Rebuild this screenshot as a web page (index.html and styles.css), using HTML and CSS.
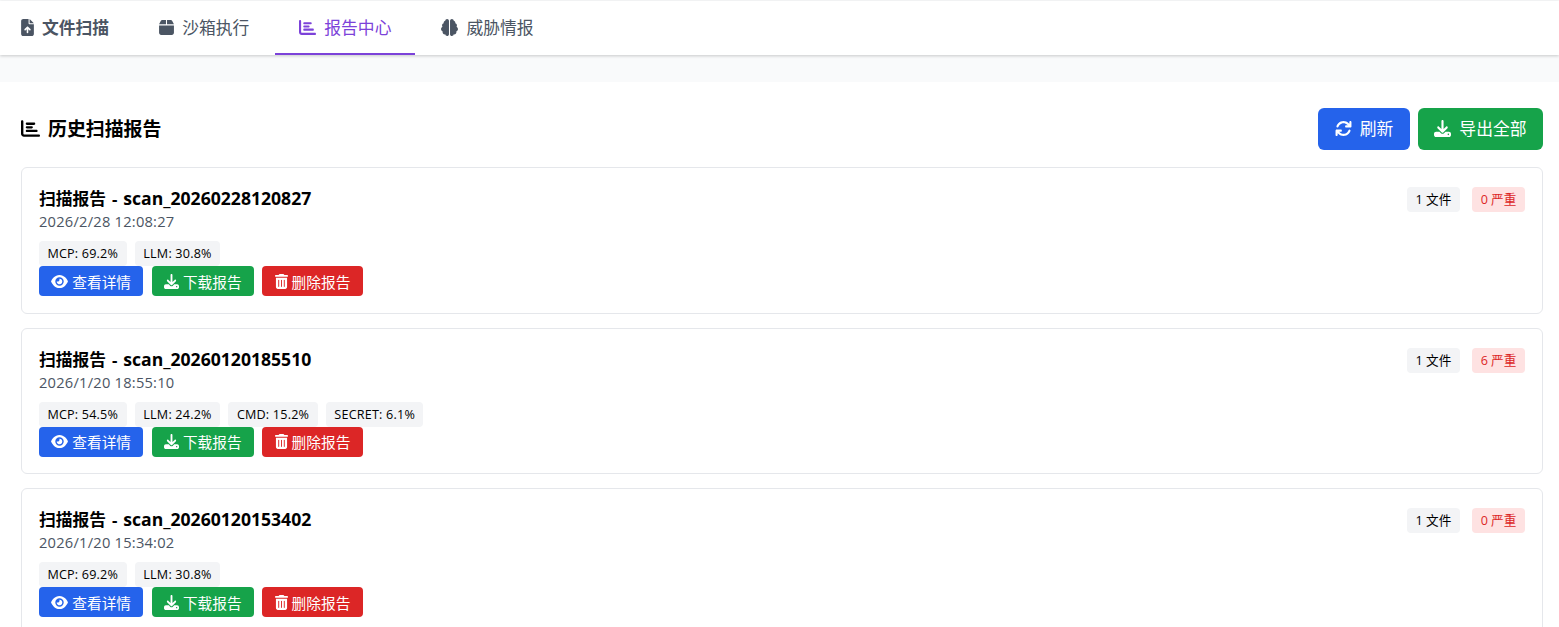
FILE: index.html
```html
<!DOCTYPE html>
<html lang="zh-CN">
<head>
  <meta charset="UTF-8">
  <title>报告中心</title>
  <link rel="stylesheet" href="styles.css">
</head>
<body>

  <!-- shared icons -->
  <svg class="sprite">
    <symbol id="i-file" viewBox="0 0 384 512"><path d="M64 0C28.7 0 0 28.7 0 64V448c0 35.3 28.7 64 64 64H320c35.3 0 64-28.7 64-64V160H256c-17.7 0-32-14.3-32-32V0H64zM256 0V128H384L256 0zM216 408c0 13.3-10.7 24-24 24s-24-10.7-24-24V305.9l-31 31c-9.4 9.4-24.6 9.4-33.9 0s-9.4-24.6 0-33.9l72-72c9.4-9.4 24.6-9.4 33.9 0l72 72c9.4 9.4 9.4 24.6 0 33.9s-24.6 9.4-33.9 0l-31-31V408z"/></symbol>
    <symbol id="i-box" viewBox="0 0 448 512"><path d="M50.7 58.5L0 160H208V32H93.7C75.5 32 58.9 42.3 50.7 58.5zM240 160H448L397.3 58.5C389.1 42.3 372.5 32 354.3 32H240V160zm208 32H0V416c0 35.3 28.7 64 64 64H384c35.3 0 64-28.7 64-64V192z"/></symbol>
    <symbol id="i-chart" viewBox="0 0 512 512"><path d="M32 32c17.7 0 32 14.3 32 32V400c0 8.8 7.2 16 16 16H480c17.7 0 32 14.3 32 32s-14.3 32-32 32H80c-44.2 0-80-35.8-80-80V64C0 46.3 14.3 32 32 32zm96 96c0-17.7 14.3-32 32-32l192 0c17.7 0 32 14.3 32 32s-14.3 32-32 32l-192 0c-17.7 0-32-14.3-32-32zm32 64H288c17.7 0 32 14.3 32 32s-14.3 32-32 32H160c-17.7 0-32-14.3-32-32s14.3-32 32-32zm0 96H416c17.7 0 32 14.3 32 32s-14.3 32-32 32H160c-17.7 0-32-14.3-32-32s14.3-32 32-32z"/></symbol>
    <symbol id="i-brain" viewBox="0 0 512 512"><path d="M184 0c30.9 0 56 25.1 56 56V456c0 30.9-25.1 56-56 56c-28.9 0-52.7-21.9-55.7-50.1c-5.2 1.4-10.7 2.1-16.3 2.1c-35.3 0-64-28.7-64-64c0-7.4 1.3-14.6 3.6-21.2C21.4 367.4 0 338.2 0 304c0-31.9 18.7-59.5 45.8-72.3C37.1 220.8 32 207 32 192c0-30.7 21.6-56.3 50.4-62.6C80.8 123.9 80 118 80 112c0-29.9 20.6-55.1 48.3-62.1C131.3 21.9 155.1 0 184 0zM328 0c28.9 0 52.6 21.9 55.7 49.9c27.8 7 48.3 32.1 48.3 62.1c0 6-.8 11.9-2.4 17.4c28.8 6.2 50.4 31.9 50.4 62.6c0 15-5.1 28.8-13.8 39.7C493.3 244.5 512 272.1 512 304c0 34.2-21.4 63.4-51.6 74.8c2.3 6.6 3.6 13.8 3.6 21.2c0 35.3-28.7 64-64 64c-5.6 0-11.1-.7-16.3-2.1c-3 28.2-26.8 50.1-55.7 50.1c-30.9 0-56-25.1-56-56V56c0-30.9 25.1-56 56-56z"/></symbol>
    <symbol id="i-sync" viewBox="0 0 512 512"><path d="M105.1 202.6c7.7-21.8 20.2-42.3 37.8-59.8c62.5-62.5 163.8-62.5 226.3 0L386.3 160H336c-17.7 0-32 14.3-32 32s14.3 32 32 32H463.5c0 0 0 0 0 0h.4c17.7 0 32-14.3 32-32V64c0-17.7-14.3-32-32-32s-32 14.3-32 32v51.2L414.4 97.6c-87.5-87.5-229.3-87.5-316.8 0C73.2 122 55.6 150.7 44.8 181.4c-5.9 16.7 2.9 34.9 19.5 40.8s34.9-2.9 40.8-19.5zM39 289.3c-5 1.5-9.8 4.2-13.7 8.2c-4 4-6.7 8.8-8.1 14c-.3 1.2-.6 2.5-.8 3.8c-.3 1.7-.4 3.4-.4 5.1V448c0 17.7 14.3 32 32 32s32-14.3 32-32V396.9l17.6 17.5 0 0c87.5 87.4 229.3 87.4 316.7 0c24.4-24.4 42.1-53.1 52.9-83.7c5.9-16.7-2.9-34.9-19.5-40.8s-34.9 2.9-40.8 19.5c-7.7 21.8-20.2 42.3-37.8 59.8c-62.5 62.5-163.8 62.5-226.3 0l-.1-.1L125.6 352H176c17.7 0 32-14.3 32-32s-14.3-32-32-32H48.4c-1.6 0-3.2 .1-4.8 .3s-3.1 .5-4.6 1z"/></symbol>
    <symbol id="i-download" viewBox="0 0 512 512"><path d="M288 32c0-17.7-14.3-32-32-32s-32 14.3-32 32V274.7l-73.4-73.4c-12.5-12.5-32.8-12.5-45.3 0s-12.5 32.8 0 45.3l128 128c12.5 12.5 32.8 12.5 45.3 0l128-128c12.5-12.5 12.5-32.8 0-45.3s-32.8-12.5-45.3 0L288 274.7V32zM64 352c-35.3 0-64 28.7-64 64v32c0 35.3 28.7 64 64 64H448c35.3 0 64-28.7 64-64V416c0-35.3-28.7-64-64-64H346.5l-45.3 45.3c-25 25-65.5 25-90.5 0L165.5 352H64zm368 56a24 24 0 1 1 0 48 24 24 0 1 1 0-48z"/></symbol>
    <symbol id="i-eye" viewBox="0 0 576 512"><path d="M288 32c-80.8 0-145.5 36.8-192.6 80.6C48.6 156 17.3 208 2.5 243.7c-3.3 7.9-3.3 16.7 0 24.6C17.3 304 48.6 356 95.4 399.4C142.5 443.2 207.2 480 288 480s145.5-36.8 192.6-80.6c46.8-43.5 78.1-95.4 93-131.1c3.3-7.9 3.3-16.7 0-24.6c-14.9-35.7-46.2-87.7-93-131.1C433.5 68.8 368.8 32 288 32zM144 256a144 144 0 1 1 288 0 144 144 0 1 1 -288 0zm144-64c0 35.3-28.7 64-64 64c-7.1 0-13.9-1.2-20.3-3.3c-5.5-1.8-11.9 1.6-11.7 7.4c.3 6.9 1.3 13.8 3.2 20.7c13.7 51.2 66.4 81.6 117.6 67.9s81.6-66.4 67.9-117.6c-11.1-41.5-47.8-69.4-88.6-71.1c-5.8-.2-9.2 6.1-7.4 11.7c2.1 6.4 3.3 13.2 3.3 20.3z"/></symbol>
    <symbol id="i-trash" viewBox="0 0 448 512"><path d="M135.2 17.7C140.6 6.8 151.7 0 163.8 0H284.2c12.1 0 23.2 6.8 28.6 17.7L320 32h96c17.7 0 32 14.3 32 32s-14.3 32-32 32H32C14.3 96 0 81.7 0 64S14.3 32 32 32h96l7.2-14.3zM32 128H416V448c0 35.3-28.7 64-64 64H96c-35.3 0-64-28.7-64-64V128zm96 64c-8.8 0-16 7.2-16 16V432c0 8.8 7.2 16 16 16s16-7.2 16-16V208c0-8.8-7.2-16-16-16zm96 0c-8.8 0-16 7.2-16 16V432c0 8.8 7.2 16 16 16s16-7.2 16-16V208c0-8.8-7.2-16-16-16zm96 0c-8.8 0-16 7.2-16 16V432c0 8.8 7.2 16 16 16s16-7.2 16-16V208c0-8.8-7.2-16-16-16z"/></symbol>
  </svg>

  <nav class="tabs">
    <a class="tab tab-bold"><svg class="tab-icon w13"><use href="#i-file"/></svg>文件扫描</a>
    <a class="tab"><svg class="tab-icon w15"><use href="#i-box"/></svg>沙箱执行</a>
    <a class="tab active"><svg class="tab-icon w17"><use href="#i-chart"/></svg>报告中心</a>
    <a class="tab"><svg class="tab-icon w17"><use href="#i-brain"/></svg>威胁情报</a>
  </nav>

  <main class="panel">
    <div class="panel-head">
      <h2><svg class="head-icon"><use href="#i-chart"/></svg>历史扫描报告</h2>
      <div class="head-actions">
        <button class="btn btn-lg blue"><svg class="btn-icon"><use href="#i-sync"/></svg>刷新</button>
        <button class="btn btn-lg green"><svg class="btn-icon"><use href="#i-download"/></svg>导出全部</button>
      </div>
    </div>

    <section class="card">
      <div class="card-top">
        <div>
          <h3>扫描报告 - <span class="scan-id">scan_20260228120827</span></h3>
          <p class="date">2026/2/28 12:08:27</p>
        </div>
        <div class="badges">
          <span class="badge">1 文件</span>
          <span class="badge danger">0 严重</span>
        </div>
      </div>
      <div class="tags">
        <span class="tag">MCP: 69.2%</span>
        <span class="tag">LLM: 30.8%</span>
      </div>
      <div class="actions">
        <button class="btn blue"><svg class="btn-icon eye"><use href="#i-eye"/></svg>查看详情</button>
        <button class="btn green"><svg class="btn-icon"><use href="#i-download"/></svg>下载报告</button>
        <button class="btn red"><svg class="btn-icon trash"><use href="#i-trash"/></svg>删除报告</button>
      </div>
    </section>

    <section class="card">
      <div class="card-top">
        <div>
          <h3>扫描报告 - <span class="scan-id">scan_20260120185510</span></h3>
          <p class="date">2026/1/20 18:55:10</p>
        </div>
        <div class="badges">
          <span class="badge">1 文件</span>
          <span class="badge danger">6 严重</span>
        </div>
      </div>
      <div class="tags">
        <span class="tag">MCP: 54.5%</span>
        <span class="tag">LLM: 24.2%</span>
        <span class="tag">CMD: 15.2%</span>
        <span class="tag">SECRET: 6.1%</span>
      </div>
      <div class="actions">
        <button class="btn blue"><svg class="btn-icon eye"><use href="#i-eye"/></svg>查看详情</button>
        <button class="btn green"><svg class="btn-icon"><use href="#i-download"/></svg>下载报告</button>
        <button class="btn red"><svg class="btn-icon trash"><use href="#i-trash"/></svg>删除报告</button>
      </div>
    </section>

    <section class="card">
      <div class="card-top">
        <div>
          <h3>扫描报告 - <span class="scan-id">scan_20260120153402</span></h3>
          <p class="date">2026/1/20 15:34:02</p>
        </div>
        <div class="badges">
          <span class="badge">1 文件</span>
          <span class="badge danger">0 严重</span>
        </div>
      </div>
      <div class="tags">
        <span class="tag">MCP: 69.2%</span>
        <span class="tag">LLM: 30.8%</span>
      </div>
      <div class="actions">
        <button class="btn blue"><svg class="btn-icon eye"><use href="#i-eye"/></svg>查看详情</button>
        <button class="btn green"><svg class="btn-icon"><use href="#i-download"/></svg>下载报告</button>
        <button class="btn red"><svg class="btn-icon trash"><use href="#i-trash"/></svg>删除报告</button>
      </div>
    </section>
  </main>

</body>
</html>
```

FILE: styles.css
```css
* {
  box-sizing: border-box;
}

html,
body {
  height: 100%;
  overflow: hidden;
}

body {
  margin: 0;
  background: #f9fafb;
  font-family: "Open Sans", "Noto Sans CJK SC", sans-serif;
  color: #000;
}

.sprite {
  display: none;
}

svg {
  fill: currentColor;
  flex: none;
}

.tabs {
  display: flex;
  gap: 2px;
  height: 54px;
  margin-top: 1px;
  background: #fff;
  box-shadow: 0 1px 3px rgba(0, 0, 0, 0.2);
  position: relative;
}

.tab {
  display: flex;
  align-items: center;
  gap: 8px;
  padding: 0 24px;
  font-size: 16.8px;
  color: #4b5563;
  border-bottom: 2px solid transparent;
}

.tab:first-child {
  padding-left: 21px;
}

.tab-bold {
  font-weight: 700;
}

.tab.active {
  color: #7c42d9;
  border-bottom-color: #7c42d9;
}

.tab-icon {
  height: 17px;
}

.w13 {
  width: 13px;
}

.w15 {
  width: 15px;
}

.w17 {
  width: 17px;
}

.panel {
  margin-top: 27px;
  padding: 26px 16px 0 21px;
  background: #fff;
  height: 545px;
}

.panel-head {
  display: flex;
  align-items: center;
  justify-content: space-between;
  margin-bottom: 17px;
}

.panel-head h2 {
  display: flex;
  align-items: center;
  gap: 8px;
  margin: 0 0 2px;
  font-size: 18.9px;
  font-weight: 700;
}

.head-icon {
  width: 19px;
  height: 19px;
}

.head-actions {
  display: flex;
  gap: 8px;
}

.btn {
  display: inline-flex;
  align-items: center;
  gap: 4px;
  height: 30px;
  padding: 0 12.25px;
  border: 0;
  border-radius: 4px;
  font-family: inherit;
  font-size: 14.7px;
  color: #fff;
}

.btn-lg {
  height: 42px;
  padding: 0 16.5px 2px;
  gap: 8px;
  border-radius: 6px;
  font-size: 16.8px;
}

.btn-icon {
  width: 15px;
  height: 15px;
}

.btn-lg .btn-icon {
  width: 17px;
  height: 17px;
}

.btn-icon.eye {
  width: 17px;
}

.btn-icon.trash {
  width: 13px;
}

.blue {
  background: #2563eb;
}

.green {
  background: #16a34a;
}

.red {
  background: #dc2626;
}

.card {
  margin-bottom: 14px;
  padding: 16px 17px;
  border: 1px solid #e5e7eb;
  border-radius: 6px;
  height: 146.5px;
}

.card-top {
  display: flex;
  justify-content: space-between;
  align-items: flex-start;
}

.card h3 {
  height: 28px;
  margin: 0;
  font-size: 16.8px;
  line-height: 28px;
  font-weight: 700;
  word-spacing: 1.5px;
}

.scan-id {
  font-size: 17.6px;
}

.date {
  margin: 0;
  font-size: 14.7px;
  line-height: 19px;
  letter-spacing: 0.22px;
  color: #4b5563;
}

.badges {
  display: flex;
  gap: 12px;
  margin-top: 3px;
}

.badge {
  height: 25px;
  padding: 0 8.7px;
  border-radius: 4px;
  background: #f3f4f6;
  font-size: 12.6px;
  line-height: 25px;
}

.badge.danger {
  background: #fee2e2;
  color: #dc2626;
}

.tags {
  display: flex;
  gap: 8.4px;
  margin-top: 10px;
}

.tag {
  height: 25px;
  padding: 0 8.4px;
  border-radius: 4px;
  background: #f3f4f6;
  font-size: 12.6px;
  letter-spacing: 0.2px;
  line-height: 25px;
}

.actions {
  display: flex;
  gap: 8.4px;
}
```
